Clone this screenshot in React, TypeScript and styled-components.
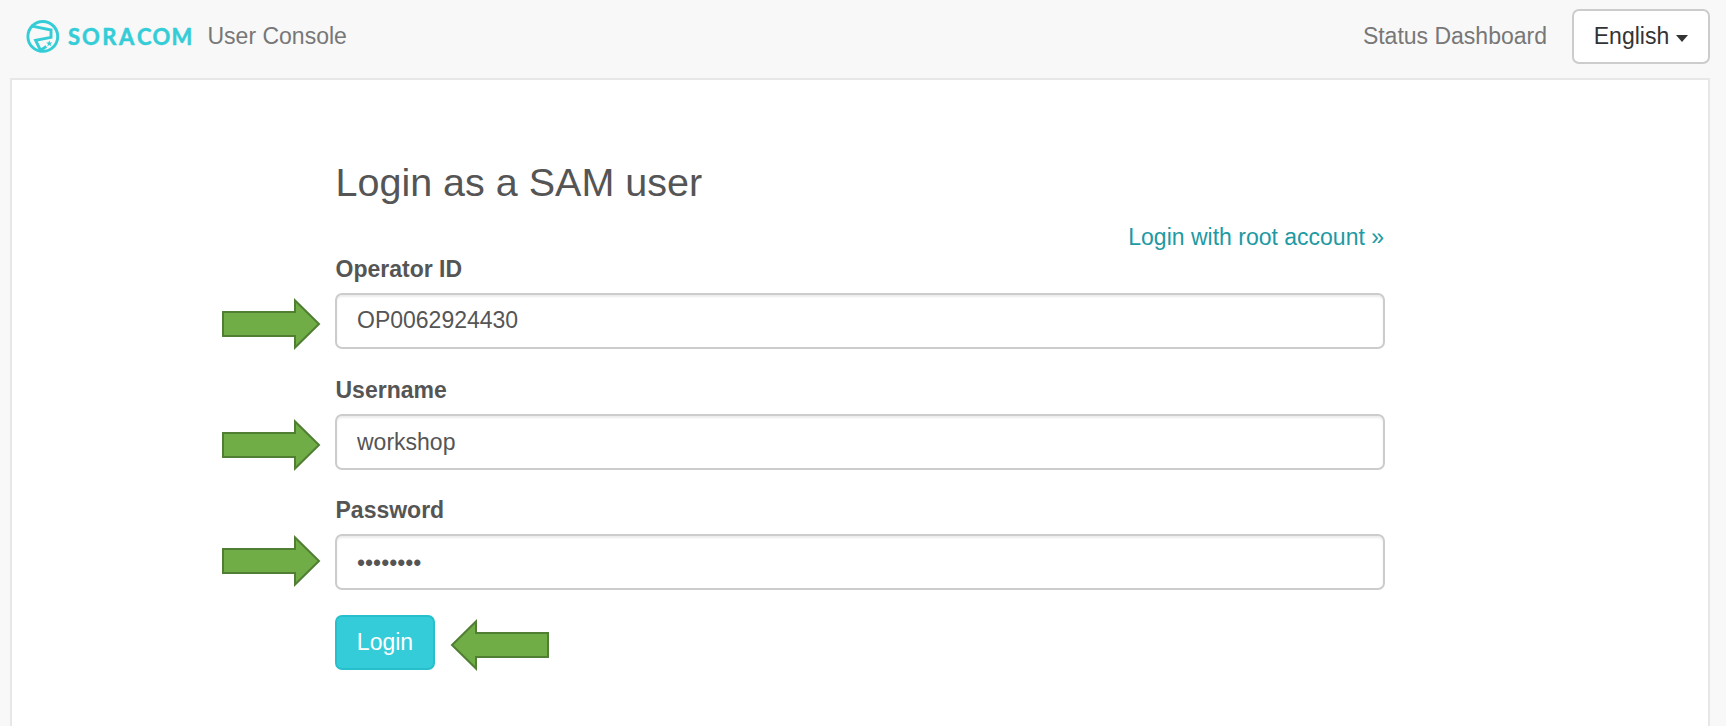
import React from 'react';
import styled, { createGlobalStyle } from 'styled-components';

const Global = createGlobalStyle`
  * { box-sizing: border-box; }
  html, body { margin: 0; height: 100%; overflow: hidden; }
  body {
    background: #f8f8f8;
    color: #555;
    font-family: "Liberation Sans", Arial, sans-serif;
    font-size: 23px;
    line-height: 33px;
  }
`;

const Page = styled.div`
  display: flex;
  flex-direction: column;
  height: 726px;
  padding: 0 16px 0 10px;
`;

const Navbar = styled.header`
  display: flex;
  align-items: center;
  flex: none;
  height: 78px;
  padding: 0 0 6px 15px;
`;

const Brand = styled.a`
  display: flex;
  align-items: center;
  gap: 10.5px;
  color: #777;
`;

const NavLink = styled.a`
  margin-left: auto;
  margin-right: 25px;
  color: #777;
`;

const LanguageButton = styled.button`
  display: flex;
  align-items: center;
  justify-content: center;
  gap: 7px;
  width: 138px;
  height: 55px;
  padding: 0;
  border: 2px solid #ccc;
  border-radius: 7px;
  background: #fff;
  color: #333;
  font: inherit;
`;

const Caret = styled.span`
  margin-top: 4px;
  border-top: 7px solid #333;
  border-left: 6.5px solid transparent;
  border-right: 6.5px solid transparent;
`;

const Panel = styled.main`
  flex: 1;
  padding: 78px 323px 0;
  border: 2px solid #e7e7e7;
  border-bottom: 0;
  background: #fff;
`;

const Title = styled.h1`
  margin: 0;
  padding-left: 0.5px;
  font-size: 39.5px;
  font-weight: 400;
  line-height: 48px;
`;

const RootLink = styled.a`
  display: block;
  margin-top: 15px;
  padding-right: 1px;
  text-align: right;
  color: #2199a3;
  line-height: 32px;
`;

const Field = styled.div`
  position: relative;
  margin-bottom: 24.5px;
`;

const Label = styled.label`
  display: block;
  height: 40px;
  padding-left: 0.5px;
  line-height: 33px;
  font-weight: 700;
`;

const Input = styled.input<{ $drop: number }>`
  display: block;
  width: 100%;
  height: 56px;
  padding: ${(p) => p.$drop}px 20px ${(p) => 2 - p.$drop}px;
  border: 2px solid #ccc;
  border-radius: 7px;
  background: #fff;
  box-shadow: inset 0 2px 2px rgba(0, 0, 0, 0.075);
  color: #555;
  font: inherit;
  outline: none;
`;

const Actions = styled.div`
  display: flex;
  align-items: flex-start;
  gap: 15px;
`;

const LoginButton = styled.button`
  width: 100px;
  height: 55px;
  padding: 0;
  border: 2px solid #26bfcb;
  border-radius: 7px;
  background: #35ccd9;
  color: #fff;
  font: inherit;
`;

const FieldArrow = styled.svg<{ $top: number }>`
  position: absolute;
  left: -113px;
  top: ${(p) => p.$top}px;
`;

const BackArrow = styled.svg`
  margin-top: 4.5px;
  transform: scaleX(-1);
`;

const arrowPoints = '1,14 73,14 73,2.5 97,26 73,49.5 73,38 1,38';

const ArrowShape = () => (
  <polygon points={arrowPoints} fill="#70ad47" stroke="#507e32" strokeWidth="2" />
);

const starPath = 'l.9 2.1 2.2.1-1.8 1.4.7 2.2-2-1.2-2 1.2.7-2.2-1.8-1.4 2.2-.1z';

const Logo = () => (
  <svg width="172" height="36" viewBox="0 0 172 36">
    <g fill="none" stroke="#34cdd7" strokeWidth="2.9">
      <circle cx="17.8" cy="18.4" r="14.9" />
      <path d="M6 7.8 L26 12 V19.4 L10.6 22.4 L15.6 32.5 L21.3 28.3" />
    </g>
    <path d={`M24.3 22.4${starPath}`} fill="#34cdd7" />
    <text
      x="43 57 77.2 94 112 127.6 146.6"
      y="26.8"
      fill="#34cdd7"
      stroke="#34cdd7"
      strokeWidth="0.5"
      fontFamily="Lato, sans-serif"
      fontSize="22"
      fontWeight="700"
    >
      SORACOM
    </text>
  </svg>
);

const fields = [
  { id: 'operator', label: 'Operator ID', type: 'text', value: 'OP0062924430', arrowTop: 45, drop: 0 },
  { id: 'username', label: 'Username', type: 'text', value: 'workshop', arrowTop: 45.5, drop: 2 },
  { id: 'password', label: 'Password', type: 'password', value: 'workshop', arrowTop: 41, drop: 2 },
];

export default function App() {
  return (
    <Page>
      <Global />
      <Navbar>
        <Brand>
          <Logo />
          User Console
        </Brand>
        <NavLink>Status Dashboard</NavLink>
        <LanguageButton>
          English
          <Caret />
        </LanguageButton>
      </Navbar>
      <Panel>
        <Title>Login as a SAM user</Title>
        <RootLink>Login with root account »</RootLink>
        {fields.map((f) => (
          <Field key={f.id}>
            <Label htmlFor={f.id}>{f.label}</Label>
            <Input id={f.id} type={f.type} defaultValue={f.value} $drop={f.drop} />
            <FieldArrow $top={f.arrowTop} width="99" height="52">
              <ArrowShape />
            </FieldArrow>
          </Field>
        ))}
        <Actions>
          <LoginButton>Login</LoginButton>
          <BackArrow width="99" height="52">
            <ArrowShape />
          </BackArrow>
        </Actions>
      </Panel>
    </Page>
  );
}
